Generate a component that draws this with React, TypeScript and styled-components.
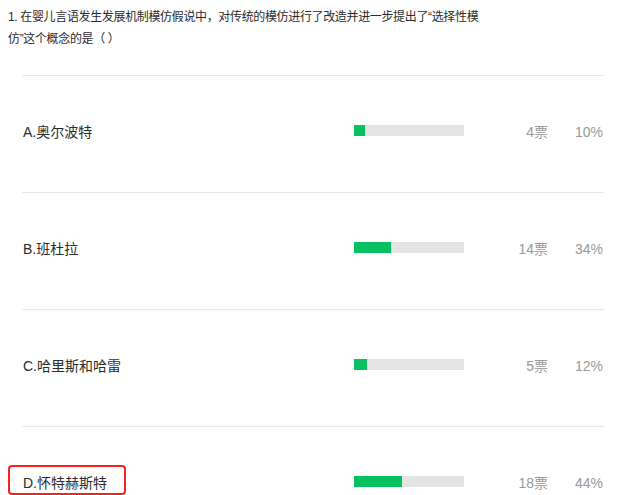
import styled, { createGlobalStyle } from "styled-components";

const GlobalStyle = createGlobalStyle`
    body {
        margin: 0;
        background: #ffffff;
        font-family: "Liberation Sans", "Noto Sans CJK SC", sans-serif;
        color: #333333;
    }
`

const Page = styled("div")`
    padding: 7px 21px 0 8px;
    height: 495px;
    box-sizing: border-box;
    overflow: hidden;
`

const Question = styled("div")`
    font-size: 12px;
    line-height: 21.5px;
    letter-spacing: -0.35px;
    color: #2b2b2b;
    width: 480px;
    margin-bottom: 25px;
`

const List = styled("div")`
    margin-left: 14px;
`

const Row = styled("div")`
    display: grid;
    grid-template-columns: 332px 110px 84px 55px;
    align-items: center;
    height: 117px;
    padding-bottom: 4px;
    box-sizing: border-box;
    border-top: 1px solid #e6e6e6;
    font-size: 14px;
    line-height: 20px;
`

const Label = styled("div")<{ $marked?: boolean }>`
    position: relative;
    padding-left: 1px;
    white-space: nowrap;
    color: #2b2b2b;

    &::after {
        content: "";
        display: ${p => (p.$marked ? "block" : "none")};
        position: absolute;
        left: -14px;
        top: -8px;
        width: 118px;
        height: 30px;
        box-sizing: border-box;
        border: 2px solid #fb1f1f;
        border-radius: 4px;
    }
`

const Track = styled("div")`
    height: 11px;
    background: #e4e4e4;
    margin-top: -3px;
`

const Fill = styled("div")`
    height: 100%;
    background: #07c160;
`

const Count = styled("div")`
    text-align: right;
    color: #999999;
`

const Percent = styled(Count)``

const options = [
    { label: "A.奥尔波特", votes: 4, pct: 10 },
    { label: "B.班杜拉", votes: 14, pct: 34 },
    { label: "C.哈里斯和哈雷", votes: 5, pct: 12 },
    { label: "D.怀特赫斯特", votes: 18, pct: 44, marked: true },
]

const App = () => {
    return (
        <Page>
            <GlobalStyle />
            <Question>
                1. 在婴儿言语发生发展机制模仿假说中，对传统的模仿进行了改造并进一步提出了“选择性模仿”这个概念的是（ ）
            </Question>
            <List>
                {options.map(o => (
                    <Row key={o.label}>
                        <Label $marked={o.marked}>{o.label}</Label>
                        <Track>
                            <Fill style={{ width: `${o.pct}%` }} />
                        </Track>
                        <Count>{o.votes}票</Count>
                        <Percent>{o.pct}%</Percent>
                    </Row>
                ))}
            </List>
        </Page>
    )
}

export default App;
